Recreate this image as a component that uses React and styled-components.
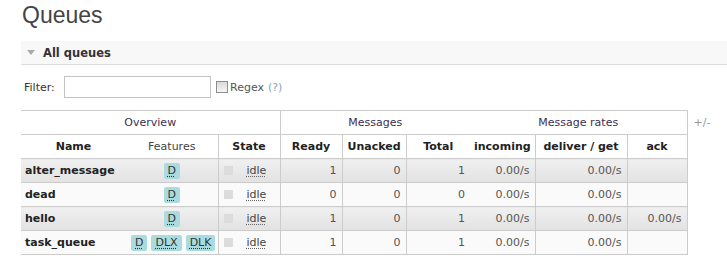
import React from 'react';
import styled, { createGlobalStyle } from 'styled-components';

const GlobalStyle = createGlobalStyle`
  html, body { margin: 0; padding: 0; background: #fff; }
  body {
    font-family: "DejaVu Sans", Verdana, sans-serif;
    font-size: 11px;
    color: #444;
  }
`;

const Page = styled.main`
  padding: 0 0 0 21px;
`;

const Title = styled.h1`
  margin: 0 0 12px;
  padding: 1px 0 0 1px;
  font: normal 23px/28px "Liberation Sans", Arial, sans-serif;
  color: #444;
`;

const SectionBar = styled.h2`
  margin: 0;
  height: 23px;
  display: flex;
  align-items: center;
  gap: 8px;
  padding-left: 6px;
  background: #f8f8f8;
  border-bottom: 1px solid #ddd;
  font-size: 11.5px;
  font-weight: bold;
  color: #333;
`;

const Caret = styled.span`
  width: 0;
  height: 0;
  border-left: 4px solid transparent;
  border-right: 4px solid transparent;
  border-top: 5px solid #aaa;
`;

const FilterRow = styled.div`
  margin-top: 11px;
  display: flex;
  align-items: center;
  height: 22px;
  padding-left: 3px;
  color: #333;
`;

const FilterLabel = styled.label`
  width: 40px;
`;

const FilterInput = styled.input`
  box-sizing: border-box;
  width: 147px;
  height: 22px;
  margin: 0 5px 0 0;
  border: 1px solid #c4c4c4;
  background: #fff;
  font: inherit;
`;

const Check = styled.input`
  appearance: none;
  box-sizing: border-box;
  width: 12px;
  height: 12px;
  margin: 0 2px 0 0;
  border: 1px solid #8e8e8e;
  background: linear-gradient(#d8d8d8, #f6f6f6);
`;

const RegexLabel = styled.span`
  color: #555;
`;

const Help = styled.span`
  margin-left: 4px;
  color: #8aa2c0;
`;

const Table = styled.table`
  margin-top: 12px;
  border-collapse: collapse;
  table-layout: fixed;
  width: 706px;
`;

const Cell = styled.td`
  height: 23px;
  padding: 0 5px;
  border-top: 1px solid #ccc;
  border-bottom: 1px solid #ccc;
  border-right: ${(p) => (p.$edge ? '1px solid #ccc' : 'none')};
  text-align: ${(p) => p.$align || 'right'};
  vertical-align: middle;
  white-space: nowrap;
  color: #555;
`;

const GroupHead = styled.th`
  height: 23px;
  padding: 0 5px;
  border-top: 1px solid #ccc;
  border-bottom: 1px solid #ccc;
  border-right: ${(p) => (p.$edge ? '1px solid #ccc' : 'none')};
  font-weight: normal;
  color: #3d3050;
  text-align: center;
  vertical-align: middle;
`;

const PlusMinus = styled.th`
  padding: 0 0 0 6px;
  border: none;
  font-weight: normal;
  color: #999;
  text-align: left;
  vertical-align: middle;
`;

const ColHead = styled.th`
  height: 23px;
  padding: 0 4px;
  border-top: 1px solid #ccc;
  border-bottom: 1px solid #ccc;
  border-right: ${(p) => (p.$edge ? '1px solid #ccc' : 'none')};
  font-weight: ${(p) => (p.$light ? 'normal' : 'bold')};
  color: ${(p) => (p.$light ? '#444' : '#222')};
  text-align: center;
  vertical-align: middle;
  white-space: nowrap;
`;

const Row = styled.tr`
  & > td {
    background: ${(p) =>
      p.$alt ? 'linear-gradient(#f0f0f0, #e2e2e2)' : '#fafafa'};
  }
`;

const NameCell = styled(Cell)`
  padding-left: 4px;
  font-weight: bold;
  color: #222;
`;

const Badges = styled.span`
  display: inline-flex;
  gap: 4px;
  vertical-align: middle;
`;

const Badge = styled.abbr`
  display: inline-block;
  height: 16px;
  line-height: 16px;
  padding: 0 4px;
  border-radius: 2px;
  background: #aadcdf;
  color: #333;
  text-decoration: underline dotted #333;
  text-underline-offset: 2px;
`;

const StateBox = styled.span`
  display: flex;
  align-items: center;
`;

const StateDot = styled.span`
  width: 9px;
  height: 9px;
  background: #dcdcdc;
  margin-right: 14px;
`;

const StateText = styled.abbr`
  color: #444;
  text-decoration: underline dotted #666;
  text-underline-offset: 2px;
`;

const queues = [
  { name: 'alter_message', features: ['D'], ready: 1, unacked: 0, total: 1, incoming: '0.00/s', deliver: '0.00/s', ack: '' },
  { name: 'dead', features: ['D'], ready: 0, unacked: 0, total: 0, incoming: '0.00/s', deliver: '0.00/s', ack: '' },
  { name: 'hello', features: ['D'], ready: 1, unacked: 0, total: 1, incoming: '0.00/s', deliver: '0.00/s', ack: '0.00/s' },
  { name: 'task_queue', features: ['D', 'DLX', 'DLK'], ready: 1, unacked: 0, total: 1, incoming: '0.00/s', deliver: '0.00/s', ack: '' },
];

const widths = [105, 92, 62, 62, 64, 64, 65, 92, 60, 40];

export default function App() {
  return (
    <Page>
      <GlobalStyle />
      <Title>Queues</Title>
      <SectionBar>
        <Caret />
        All queues
      </SectionBar>
      <FilterRow>
        <FilterLabel>Filter:</FilterLabel>
        <FilterInput type="text" />
        <Check type="checkbox" />
        <RegexLabel>Regex</RegexLabel>
        <Help>(?)</Help>
      </FilterRow>
      <Table>
        <colgroup>
          {widths.map((w, i) => (
            <col key={i} style={{ width: w }} />
          ))}
        </colgroup>
        <thead>
          <tr>
            <GroupHead colSpan={3} $edge>Overview</GroupHead>
            <GroupHead colSpan={3}>Messages</GroupHead>
            <GroupHead colSpan={3} $edge>Message rates</GroupHead>
            <PlusMinus>+/-</PlusMinus>
          </tr>
          <tr>
            <ColHead>Name</ColHead>
            <ColHead $light $edge>Features</ColHead>
            <ColHead $edge>State</ColHead>
            <ColHead $edge>Ready</ColHead>
            <ColHead $edge>Unacked</ColHead>
            <ColHead>Total</ColHead>
            <ColHead $edge>incoming</ColHead>
            <ColHead $edge>deliver / get</ColHead>
            <ColHead $edge>ack</ColHead>
          </tr>
        </thead>
        <tbody>
          {queues.map((q, i) => (
            <Row key={q.name} $alt={i % 2 === 0}>
              <NameCell $align="left">{q.name}</NameCell>
              <Cell $align="center" $edge>
                <Badges>
                  {q.features.map((f) => (
                    <Badge key={f}>{f}</Badge>
                  ))}
                </Badges>
              </Cell>
              <Cell $align="left" $edge>
                <StateBox>
                  <StateDot />
                  <StateText>idle</StateText>
                </StateBox>
              </Cell>
              <Cell $edge>{q.ready}</Cell>
              <Cell $edge>{q.unacked}</Cell>
              <Cell>{q.total}</Cell>
              <Cell $edge>{q.incoming}</Cell>
              <Cell $edge>{q.deliver}</Cell>
              <Cell $edge>{q.ack}</Cell>
            </Row>
          ))}
        </tbody>
      </Table>
    </Page>
  );
}
